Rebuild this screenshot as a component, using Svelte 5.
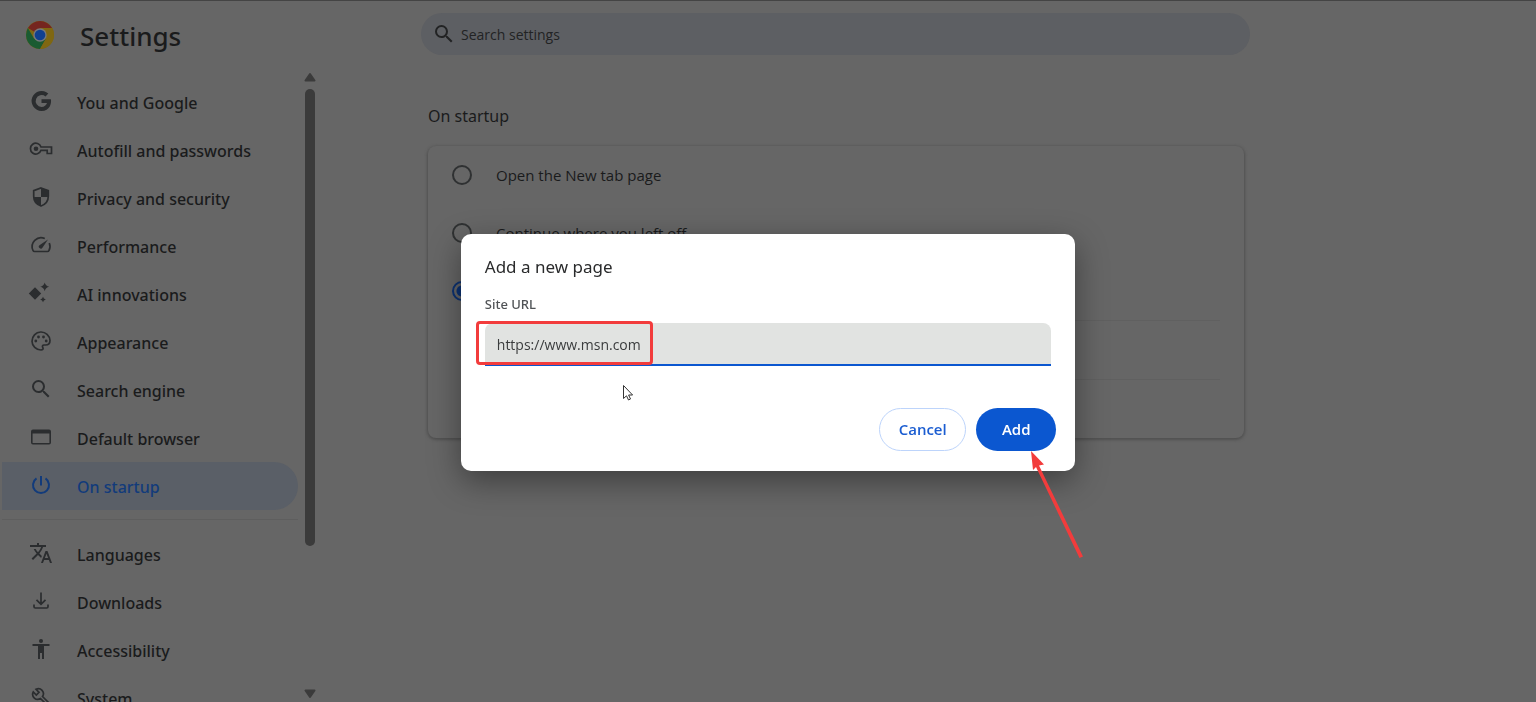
<script>
  let siteUrl = $state('https://www.msn.com');
  let startup = $state('pages');

  const groups = [
    [
      { id: 'google', label: 'You and Google' },
      { id: 'autofill', label: 'Autofill and passwords' },
      { id: 'privacy', label: 'Privacy and security' },
      { id: 'performance', label: 'Performance' },
      { id: 'ai', label: 'AI innovations' },
      { id: 'appearance', label: 'Appearance' },
      { id: 'search', label: 'Search engine' },
      { id: 'browser', label: 'Default browser' },
      { id: 'startup', label: 'On startup', active: true },
    ],
    [
      { id: 'languages', label: 'Languages' },
      { id: 'downloads', label: 'Downloads' },
      { id: 'accessibility', label: 'Accessibility' },
      { id: 'system', label: 'System' },
    ],
  ];
</script>

{#snippet icon(id)}
  <svg class="icon" viewBox="0 0 24 24" aria-hidden="true">
    {#if id === 'google'}
      <path d="M12.5 10.2v3.8H18c-.7 2.3-2.700 4-5.500 4a6 6 0 1 1 4-10.600l2.800-2.800A10 10 0 1 0 12.500 22c8.400 0 10.200-7.800 9.400-11.800z" />
    {:else if id === 'autofill'}
      <path class="line" d="M12 10h10.500v6.500h-4.300v-3.200H12a5.400 5.400 0 1 1 0-3.300z" />
      <circle cx="7" cy="11.800" r="2.300" />
    {:else if id === 'privacy'}
      <path class="line" d="M12 3l7.300 2.700v5.500c0 4.700-3 8.200-7.300 9.800-4.300-1.600-7.300-5.100-7.300-9.800V5.700z" />
      <path d="M12 3l7.300 2.700V12H12zM4.700 12H12v9c-4-1.500-6.800-4.600-7.300-9z" />
    {:else if id === 'performance'}
      <path class="line" d="M15.800 5.500A9 9 0 0 0 4 17.500q.4 1 1.500 1h13q1.100 0 1.500-1a9 9 0 0 0 .3-7.500" />
      <path d="M19 6.500l-5.400 8.100a2 2 0 1 1-2.800-2.700z" />
    {:else if id === 'ai'}
      <path d="M6 6.300l6.200 6.200L6 18.700-.2 12.500zM15.700 1.500q.8 3.600 4.500 4.300-3.700.8-4.500 4.500-.8-3.700-4.500-4.500 3.700-.7 4.500-4.300zM14 15.700q.5 2.300 2.800 2.800-2.300.5-2.800 2.800-.5-2.300-2.800-2.800 2.300-.5 2.800-2.800z" />
    {:else if id === 'appearance'}
      <path class="line" d="M12 21a9 9 0 1 1 9-9.500c0 3-2 4.500-4.500 4.500H15c-1.500 0-2 1.300-1.200 2.500.8 1.300 0 2.500-1.800 2.500z" />
      <circle cx="6.800" cy="12" r="1.400" /><circle cx="9.500" cy="8" r="1.400" />
      <circle cx="14.500" cy="8" r="1.400" /><circle cx="17.200" cy="12" r="1.400" />
    {:else if id === 'search'}
      <path d="M15.500 14h-.79l-.28-.27A6.470 6.470 0 0 0 16 9.500 6.500 6.500 0 1 0 9.500 16c1.610 0 3.090-.59 4.230-1.570l.27.28v.79l5 4.990L20.490 19zm-6 0C7.010 14 5 11.990 5 9.500S7.010 5 9.500 5 14 7.010 14 9.500 11.990 14 9.500 14z" />
    {:else if id === 'browser'}
      <path d="M4 4.500h16a2 2 0 0 1 2 2v11a2 2 0 0 1-2 2H4a2 2 0 0 1-2-2v-11a2 2 0 0 1 2-2zm-.4 4v9.400h16.800V8.500z" />
    {:else if id === 'startup'}
      <path class="line thick" d="M12 3v9.500M7.500 5.400a8 8 0 1 0 9 0" />
    {:else if id === 'languages'}
      <path d="M12.870 15.070l-2.540-2.510.03-.03A17.520 17.520 0 0 0 14.070 6H17V4h-7V2H8v2H1v2h11.170C11.500 7.920 10.440 9.750 9 11.350 8.070 10.320 7.300 9.190 6.690 8h-2c.73 1.630 1.730 3.170 2.980 4.560l-5.090 5.020L4 19l5-5 3.110 3.110zM18.500 10h-2L12 22h2l1.120-3h4.750L21 22h2zm-2.620 7l1.620-4.330L19.120 17z" />
    {:else if id === 'downloads'}
      <path class="line" d="M12 3.500V15M7.500 10.800l4.500 4.500 4.500-4.500M5 15.500v2.200q0 1.300 1.300 1.300h11.400q1.300 0 1.300-1.300v-2.200" />
    {:else if id === 'accessibility'}
      <circle cx="12" cy="4" r="2" />
      <path d="M20.500 9H15v13h-2v-6h-2v6H9V9H3.500V7h17z" />
    {:else if id === 'system'}
      <path class="line" d="M20.500 18.500l-7-7A5 5 0 0 0 7 4.300l3 3-2.700 2.700-3-3a5 5 0 0 0 7.200 6.500l7 7z" />
    {/if}
  </svg>
{/snippet}

<div class="page">
  <aside class="sidebar">
    <div class="brand">
      <svg class="logo" viewBox="0 0 28 28" aria-hidden="true">
        <circle cx="14" cy="14" r="14" fill="#7f6712" />
        <path d="M14 14L1.900 7A14 14 0 0 1 26.100 7z" fill="#75251f" />
        <path d="M14 14l6 3.500L14 28A14 14 0 0 1 1.900 7L8 17.500z" fill="#1a5b31" />
        <path d="M14 7h12.100A14 14 0 0 1 14 28l6.100-10.500z" fill="#7f6712" />
        <circle cx="14" cy="14" r="6.700" fill="#77797c" />
        <circle cx="14" cy="14" r="5.300" fill="#104090" />
      </svg>
      <h1>Settings</h1>
    </div>

    <div class="menu">
      <nav aria-label="Settings sections">
        {#each groups as group}
          <ul>
            {#each group as item}
              <li>
                <a href="#{item.id}" class:active={item.active}>
                  {@render icon(item.id)}
                  {item.label}
                </a>
              </li>
            {/each}
          </ul>
        {/each}
      </nav>
      <div class="scrollbar" aria-hidden="true">
        <svg viewBox="0 0 14 12"><path d="M7 3L11.500 9.500h-9z" /></svg>
        <div class="track"><div class="thumb"></div></div>
        <svg viewBox="0 0 14 12"><path d="M7 9L2.500 2.500h9z" /></svg>
      </div>
    </div>
  </aside>

  <main>
    <label class="search">
      {@render icon('search')}
      <input type="search" placeholder="Search settings" aria-label="Search settings" />
    </label>

    <section>
      <h2>On startup</h2>
      <div class="card">
        <label class="row">
          <input type="radio" name="startup" value="newtab" bind:group={startup} />
          Open the New tab page
        </label>
        <label class="row">
          <input type="radio" name="startup" value="continue" bind:group={startup} />
          Continue where you left off
        </label>
        <div class="row">
          <input type="radio" name="startup" value="pages" aria-label="Open specific pages" bind:group={startup} />
        </div>
        <div class="row sub"></div>
        <div class="row sub"></div>
      </div>
    </section>
  </main>
</div>

<div class="overlay">
  <div class="dialog" role="dialog" aria-modal="true" aria-labelledby="dialog-title">
    <h2 id="dialog-title">Add a new page</h2>
    <label for="site-url">Site URL</label>
    <div class="field">
      <input id="site-url" type="text" bind:value={siteUrl} />
      <span class="highlight"></span>
    </div>
    <div class="actions">
      <button type="button" class="cancel">Cancel</button>
      <button type="button" class="add">Add</button>
    </div>

    <svg class="cursor" viewBox="0 0 12 18" aria-hidden="true">
      <path d="M1.500 1.500v13l3-2.700 2 4.200 2-1-1.900-4h4z" />
    </svg>
    <svg class="arrow" viewBox="0 0 56 110" aria-hidden="true">
      <path d="M2 0l13 13.500-5 1L54 105.500l-3.500 1.500L7 16l-3 3z" />
    </svg>
  </div>
</div>

<style>
  :global(body) {
    background: #666;
  }

  .page,
  .overlay {
    font-family: 'Noto Sans', 'Open Sans', sans-serif;
    box-sizing: border-box;
  }

  .page {
    display: grid;
    grid-template-columns: 320px minmax(0, 829px);
    column-gap: 101px;
    height: 100vh;
    overflow: hidden;
    border-top: 1px solid #444;
    background: #666;
    color: #1a1b1c;
  }

  h1,
  h2,
  ul {
    margin: 0;
    padding: 0;
    font-weight: 500;
  }

  .icon {
    width: 24px;
    height: 24px;
    flex: none;
    fill: currentColor;
    overflow: visible;
  }

  .icon .line {
    fill: none;
    stroke: currentColor;
    stroke-width: 1.7;
  }

  .icon .thick {
    stroke-width: 2;
  }

  .sidebar {
    display: flex;
    flex-direction: column;
    min-height: 0;
  }

  .brand {
    display: flex;
    align-items: center;
    gap: 26px;
    height: 68px;
    padding-left: 26px;
    flex: none;
  }

  .logo {
    width: 28px;
    height: 28px;
  }

  h1 {
    font-size: 26px;
    line-height: 36px;
    padding-top: 2px;
  }

  .menu {
    display: flex;
    flex: 1;
    min-height: 0;
  }

  nav {
    flex: 1;
    overflow: hidden;
    padding: 9px 2px 0;
  }

  ul {
    list-style: none;
  }

  ul + ul {
    margin-top: 9px;
    padding-top: 10px;
    border-top: 1px solid #5e5e5e;
  }

  nav a {
    display: flex;
    align-items: center;
    gap: 24px;
    height: 48px;
    padding: 1px 0 0 27px;
    box-sizing: border-box;
    border-radius: 0 24px 24px 0;
    font-size: 16px;
    font-weight: 500;
    color: #1a1b1c;
    text-decoration: none;
  }

  nav a .icon {
    color: #2b2d2f;
    margin-bottom: 3px;
  }

  nav a.active,
  nav a.active .icon {
    color: #123b7b;
  }

  nav a.active {
    background: #5a5f67;
  }

  .scrollbar {
    display: flex;
    flex-direction: column;
    align-items: center;
    width: 20px;
    padding: 2px 0;
    box-sizing: border-box;
  }

  .scrollbar svg {
    width: 14px;
    height: 12px;
    fill: #3b3b3b;
    stroke: #3b3b3b;
    stroke-width: 2;
    stroke-linejoin: round;
  }

  .track {
    flex: 1;
    width: 10px;
    padding: 6px 0;
  }

  .thumb {
    height: 77%;
    border-radius: 5px;
    background: #3b3b3b;
  }

  main {
    padding-top: 12px;
  }

  .search {
    display: flex;
    align-items: center;
    gap: 5px;
    height: 42px;
    padding: 0 11px;
    border-radius: 21px;
    background: #5d5f63;
    color: #222324;
  }

  .search input {
    flex: 1;
    padding: 0;
    border: 0;
    outline: 0;
    background: none;
    font: 500 14px 'Open Sans', 'Noto Sans', sans-serif;
    color: inherit;
  }

  .search input::placeholder {
    color: #222324;
    opacity: 1;
  }

  section {
    padding: 48px 6px 0 7px;
  }

  section h2 {
    font-size: 16px;
    line-height: 26px;
    font-weight: 400;
  }

  .card {
    margin-top: 17px;
    border-radius: 8px;
    box-shadow: 0 1px 3px 1px #505050;
  }

  .row {
    display: flex;
    align-items: center;
    gap: 24px;
    height: 58px;
    padding: 0 24px;
    font-family: 'Open Sans', 'Noto Sans', sans-serif;
    font-size: 15px;
  }

  .row.sub {
    margin: 0 24px 0 68px;
    padding: 0;
    border-top: 1px solid #606060;
  }

  .row input {
    appearance: none;
    box-sizing: border-box;
    width: 20px;
    height: 20px;
    margin: 0;
    border: 2px solid #2f3132;
    border-radius: 50%;
  }

  .row input:checked {
    border-color: #0c3273;
    background: radial-gradient(#0c3273 5px, transparent 6px);
  }

  .overlay {
    position: fixed;
    inset: 0;
    display: flex;
    align-items: center;
    justify-content: center;
    padding-top: 2px;
  }

  .dialog {
    position: relative;
    width: 40%;
    min-width: 400px;
    padding: 20px 19px 20px 24px;
    box-sizing: border-box;
    border-radius: 10px;
    background: #fff;
    box-shadow: 0 10px 32px rgba(0, 0, 0, 0.4);
    color: #2a2b2c;
  }

  .dialog h2 {
    font-size: 17px;
    line-height: 26px;
    font-weight: 400;
  }

  .dialog label {
    display: block;
    margin: 14px 0 9px;
    font-size: 13px;
    line-height: 20px;
    font-weight: 500;
    color: #505356;
  }

  .field {
    position: relative;
    margin-right: 5px;
  }

  .field input {
    display: block;
    width: 100%;
    height: 43px;
    padding: 2px 12px 0;
    box-sizing: border-box;
    border: 0;
    border-bottom: 2px solid #0b57d0;
    border-radius: 8px 8px 0 0;
    outline: 0;
    background: #e1e3e1;
    font: 14px 'Open Sans', 'Noto Sans', sans-serif;
    color: #3a3c3d;
  }

  .highlight {
    position: absolute;
    left: -9px;
    top: -2px;
    width: 177px;
    height: 44px;
    box-sizing: border-box;
    border: 3px solid #f23c3c;
    border-radius: 4px;
    pointer-events: none;
  }

  .actions {
    display: flex;
    justify-content: flex-end;
    gap: 10px;
    margin-top: 42px;
  }

  button {
    height: 43px;
    padding: 0;
    border-radius: 22px;
    font: 600 15px 'Open Sans', 'Noto Sans', sans-serif;
  }

  .cancel {
    width: 87px;
    border: 1px solid #bdd4fb;
    background: #fff;
    color: #1b5dd1;
  }

  .add {
    width: 80px;
    border: 0;
    background: #0b57d0;
    color: #fff;
  }

  .cursor {
    position: absolute;
    left: 161px;
    top: 150px;
    width: 12px;
    height: 18px;
    fill: #fff;
    stroke: #333;
  }

  .arrow {
    position: absolute;
    right: -10px;
    top: 217px;
    width: 56px;
    height: 110px;
    fill: #f23c3c;
  }
</style>
